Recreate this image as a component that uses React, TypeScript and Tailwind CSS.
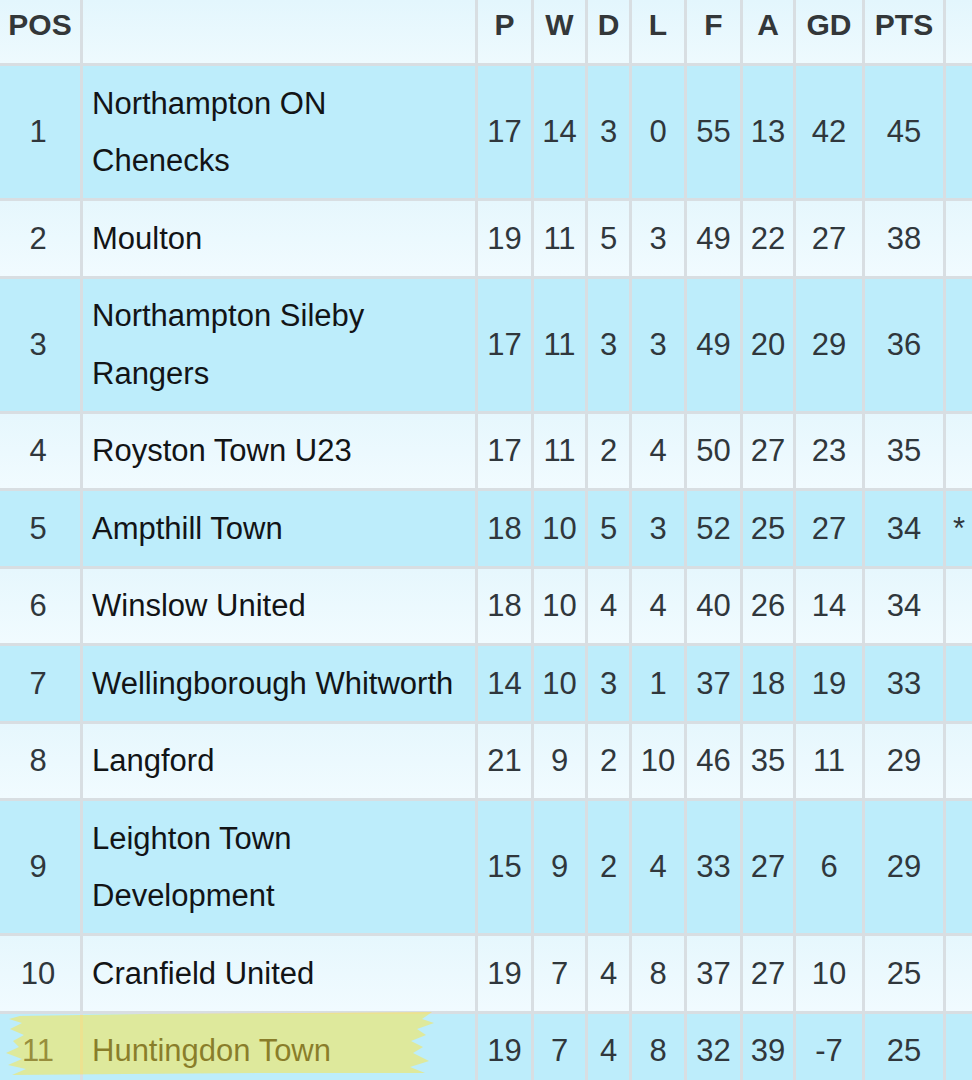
import React from "react";

type Row = { pos: number; team: string[]; p: number; w: number; d: number; l: number; f: number; a: number; gd: number; pts: number; note?: string };

const rows: Row[] = [
  { pos: 1, team: ["Northampton ON", "Chenecks"], p: 17, w: 14, d: 3, l: 0, f: 55, a: 13, gd: 42, pts: 45 },
  { pos: 2, team: ["Moulton"], p: 19, w: 11, d: 5, l: 3, f: 49, a: 22, gd: 27, pts: 38 },
  { pos: 3, team: ["Northampton Sileby", "Rangers"], p: 17, w: 11, d: 3, l: 3, f: 49, a: 20, gd: 29, pts: 36 },
  { pos: 4, team: ["Royston Town U23"], p: 17, w: 11, d: 2, l: 4, f: 50, a: 27, gd: 23, pts: 35 },
  { pos: 5, team: ["Ampthill Town"], p: 18, w: 10, d: 5, l: 3, f: 52, a: 25, gd: 27, pts: 34, note: "*" },
  { pos: 6, team: ["Winslow United"], p: 18, w: 10, d: 4, l: 4, f: 40, a: 26, gd: 14, pts: 34 },
  { pos: 7, team: ["Wellingborough Whitworth"], p: 14, w: 10, d: 3, l: 1, f: 37, a: 18, gd: 19, pts: 33 },
  { pos: 8, team: ["Langford"], p: 21, w: 9, d: 2, l: 10, f: 46, a: 35, gd: 11, pts: 29 },
  { pos: 9, team: ["Leighton Town", "Development"], p: 15, w: 9, d: 2, l: 4, f: 33, a: 27, gd: 6, pts: 29 },
  { pos: 10, team: ["Cranfield United"], p: 19, w: 7, d: 4, l: 8, f: 37, a: 27, gd: 10, pts: 25 },
  { pos: 11, team: ["Huntingdon Town"], p: 19, w: 7, d: 4, l: 8, f: 32, a: 39, gd: -7, pts: 25 },
];

const headers = ["POS", "", "P", "W", "D", "L", "F", "A", "GD", "PTS", ""];

export default function App() {
  return (
    <div
      className="relative w-[972px] h-[1080px] overflow-hidden bg-[#d8dee2]"
      style={{ fontFamily: '"Liberation Sans", Arial, Helvetica, sans-serif' }}
    >
      <div className="grid grid-cols-[80px_392px_53px_51px_41px_52px_53px_50px_66px_78px_40px] gap-[3px] w-[1009px]">
        {headers.map((h, i) => (
          <div
            key={"h" + i}
            className={`h-[63px] bg-gradient-to-b from-[#e3f6fd] to-[#eefafe] text-[30px] font-bold text-[#333739] leading-[50px] text-center`}
          >
            {h}
          </div>
        ))}
        {rows.map((r, idx) => {
          const dark = idx % 2 === 0;
          const bg = dark ? "bg-[#bdedfb]" : "bg-gradient-to-b from-[#e6f7fd] to-[#f1fbff]";
          const num = `${bg} text-center text-[31px] leading-[57.5px] py-[8.5px] text-[#30373c]`;
          const vals = [r.p, r.w, r.d, r.l, r.f, r.a, r.gd, r.pts];
          return (
            <React.Fragment key={r.pos}>
              <div className={`${num} flex items-center justify-center pr-[4px]`}>{r.pos}</div>
              <div className={`${bg} text-[31px] leading-[57.5px] py-[8.5px] pl-[9px] text-[#121416]`}>
                {r.team.map((t) => (
                  <div key={t} className="whitespace-nowrap">{t}</div>
                ))}
              </div>
              {vals.map((v, j) => (
                <div key={j} className={`${num} flex items-center justify-center`}>
                  {v}
                </div>
              ))}
              <div className={`${bg} text-[31px] leading-[57.5px] py-[8.5px] pl-[7px] text-[#30373c] flex items-center`}>
                {r.note ?? ""}
              </div>
            </React.Fragment>
          );
        })}
      </div>
      <svg
        className="absolute left-[4px] top-[1012px]"
        width="432"
        height="64"
        viewBox="0 0 432 64"
      >
        <path
          d="M 16 4 L 140 2 L 300 1 L 428 0 L 418 7 L 430 11 L 413 17 L 422 23 L 407 29 L 419 35 L 409 41 L 425 49 L 406 55 L 421 61 L 260 61 L 120 62 L 8 63 L 22 57 L 4 53 L 18 47 L 2 41 L 15 35 L 9 29 L 20 23 L 6 17 L 18 11 L 5 7 Z"
          fill="#ffe53d"
          fillOpacity="0.5"
        />
      </svg>
    </div>
  );
}
